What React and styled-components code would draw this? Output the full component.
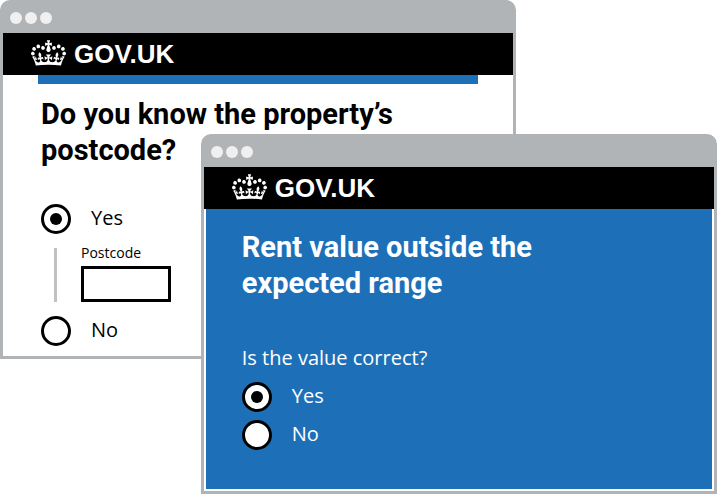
import React from "react";
import styled, { createGlobalStyle } from "styled-components";

const GlobalStyle = createGlobalStyle`
  *, *::before, *::after { box-sizing: border-box; }
  body {
    margin: 0;
    background: #fff;
    color: #000;
    font-family: "Open Sans", "Noto Sans", sans-serif;
  }
`;

const Desktop = styled.main`
  position: relative;
  min-height: 494px;
`;

const Window = styled.section`
  width: 72%;
  padding: 0 3px 3px;
  background: #b1b4b6;
  border-radius: 10px 10px 0 0;
`;

const FrontWindow = styled(Window)`
  position: absolute;
  top: 134px;
  right: 0;
`;

const TitleBar = styled.div`
  display: flex;
  align-items: center;
  gap: 3px;
  height: 33px;
  padding: 3px 7px 0;
`;

const WindowDot = styled.span`
  width: 12px;
  height: 12px;
  border-radius: 50%;
  background: #f0f0f0;
`;

const Header = styled.header`
  display: flex;
  align-items: center;
  height: 42px;
  padding: 0 28px;
  background: #000;
`;

const HomeLink = styled.a`
  display: flex;
  align-items: center;
  gap: 8px;
  color: #fff;
  font: 700 26px/30px "Liberation Sans", Arial, sans-serif;
  text-decoration: none;
`;

const CrownIcon = styled.svg`
  width: 35px;
  height: 26px;
  margin-bottom: 2px;
  fill: currentColor;
`;

const Page = styled.div`
  background: #fff;
  padding: ${(p) => (p.$framed ? "0 2px 2px" : "0 35px 10px")};
`;

const BlueBar = styled.div`
  height: 9px;
  background: #1d70b8;
`;

const Content = styled.form`
  padding: 12px 3px 0;
`;

const BluePanel = styled.form`
  padding: 20px 36px 39px;
  background: #1d70b8;
  color: #fff;
`;

const Heading = styled.h1`
  max-width: 380px;
  margin: 0;
  font: 700 29px/36px Roboto, sans-serif;
`;

const Group = styled.fieldset`
  display: flex;
  flex-direction: column;
  gap: ${(p) => p.$gap};
  min-width: 0;
  margin: ${(p) => p.$top} 0 0;
  padding: 0;
  border: 0;
`;

const Legend = styled.legend`
  padding: 0 0 10px;
  font-size: 20px;
  line-height: 28px;
`;

const Option = styled.label`
  display: flex;
  align-items: center;
  gap: 20px;
  font-size: 20px;
  line-height: 30px;
`;

const OptionText = styled.span`
  padding-bottom: 2px;
  line-height: 28px;
`;

const Radio = styled.input`
  appearance: none;
  flex: none;
  display: grid;
  place-items: center;
  width: 30px;
  height: 30px;
  margin: 0;
  border: 3px solid #000;
  border-radius: 50%;
  background: #fff;

  &:checked::before {
    content: "";
    width: 12px;
    height: 12px;
    border-radius: 50%;
    background: #000;
  }
`;

const Conditional = styled.div`
  display: flex;
  flex-direction: column;
  align-items: flex-start;
  height: 54px;
  margin-left: 13px;
  padding-left: 24px;
  border-left: 3px solid #bfc1c3;
`;

const FieldLabel = styled.label`
  font-size: 14px;
  line-height: 18px;
  margin-top: -4px;
  padding-bottom: 4px;
`;

const TextInput = styled.input`
  width: 90px;
  height: 36px;
  padding: 4px;
  border: 3px solid #000;
  border-radius: 0;
  background: #fff;
  font: inherit;
`;

function Crown() {
  return (
    <CrownIcon viewBox="0 0 132 97" aria-hidden="true">
      <path d="M25 30.2c3.5 1.5 7.7-.2 9.1-3.7 1.5-3.6-.2-7.8-3.9-9.2-3.6-1.4-7.6.3-9.1 3.9-1.4 3.5.3 7.5 3.9 9zM9 39.5c3.6 1.5 7.8-.2 9.2-3.7 1.5-3.6-.2-7.8-3.9-9.1-3.6-1.5-7.6.2-9.1 3.8-1.4 3.5.3 7.5 3.8 9zM4.4 57.2c3.5 1.5 7.7-.2 9.1-3.8 1.5-3.6-.2-7.7-3.9-9.1-3.5-1.5-7.6.3-9.1 3.8-1.4 3.5.3 7.6 3.9 9.1zm38.3-21.4c3.5 1.5 7.7-.2 9.1-3.8 1.5-3.6-.2-7.7-3.9-9.1-3.6-1.5-7.6.3-9.1 3.8-1.3 3.6.4 7.7 3.9 9.1zm64.4-5.6c-3.6 1.5-7.8-.2-9.1-3.7-1.5-3.6.2-7.8 3.8-9.2 3.6-1.4 7.7.3 9.2 3.9 1.3 3.5-.4 7.5-3.9 9zm15.9 9.3c-3.6 1.5-7.7-.2-9.1-3.7-1.5-3.6.2-7.8 3.7-9.1 3.6-1.5 7.7.2 9.2 3.8 1.5 3.5-.3 7.5-3.8 9zm4.7 17.7c-3.6 1.5-7.8-.2-9.2-3.8-1.5-3.6.2-7.7 3.9-9.1 3.6-1.5 7.7.3 9.2 3.8 1.3 3.5-.4 7.6-3.9 9.1zM89.3 35.8c-3.6 1.5-7.8-.2-9.2-3.8-1.4-3.6.2-7.7 3.9-9.1 3.6-1.5 7.7.3 9.2 3.8 1.4 3.6-.3 7.7-3.9 9.1zM69.7 17.7l8.9 4.7V9.3l-8.9 2.8c-.2-.3-.5-.6-.9-.9L72.4 0H59.6l3.5 11.2c-.3.3-.6.5-.9.9l-8.8-2.8v13.1l8.8-4.7c.3.3.6.7.9.9l-5 15.4v.1c-.2.8-.4 1.6-.4 2.4 0 4.1 3.1 7.5 7 8.1h.2c.3 0 .7.1 1 .1.4 0 .7 0 1-.1h.2c4-.6 7.1-4.1 7.1-8.1 0-.8-.1-1.7-.4-2.4V34l-5.1-15.4c.4-.2.7-.6 1-.9zM66 92.8c16.9 0 32.8 1.1 47.1 3.2 4-16.9 8.9-26.7 14-33.5l-9.6-3.4c1 4.9 1.1 7.2 0 10.2-1.5-1.4-3-4.3-4.2-8.7L108.6 76c2.8-2 5-3.2 7.5-3.3-4.4 9.4-10 11.9-13.6 11.2-4.3-.8-6.3-4.6-5.6-7.9 1-4.7 5.7-5.9 8-.5 4.3-8.7-3-11.4-7.6-8.8 7.1-7.2 7.9-13.5 2.1-21.1-8 6.1-8.1 12.3-4.5 20.8-4.7-5.4-12.1-2.5-9.5 6.2 3.4-5.2 7.9-2 7.2 3.1-.6 4.3-6.4 7.8-13.5 7.2-10.3-.9-10.9-8-11.2-13.8 2.5-.5 7.1 1.8 11 7.3L80.2 60c-4.1 4.4-8 5.3-12.3 5.4 1.4-4.4 8-11.6 8-11.6H55.5s6.4 7.2 7.9 11.6c-4.2-.1-8-1-12.3-5.4l1.4 16.4c3.9-5.5 8.5-7.7 10.9-7.3-.3 5.8-.9 12.8-11.1 13.8-7.2.6-12.9-2.9-13.5-7.2-.7-5 3.8-8.3 7.1-3.1 2.7-8.7-4.6-11.6-9.4-6.2 3.7-8.5 3.6-14.7-4.6-20.8-5.8 7.6-5 13.9 2.2 21.1-4.7-2.6-11.9.1-7.7 8.8 2.3-5.5 7.1-4.2 8.1.5.7 3.3-1.3 7.1-5.7 7.9-3.5.7-9-1.8-13.5-11.2 2.5.1 4.7 1.3 7.5 3.3l-4.7-15.4c-1.2 4.4-2.7 7.2-4.3 8.7-1.1-3-.9-5.3 0-10.2l-9.5 3.4c5 6.9 9.9 16.7 14 33.5 14.8-2.1 30.8-3.2 47.7-3.2z" />
    </CrownIcon>
  );
}

function Chrome() {
  return (
    <>
      <TitleBar>
        <WindowDot />
        <WindowDot />
        <WindowDot />
      </TitleBar>
      <Header>
        <HomeLink href="#">
          <Crown />
          GOV.UK
        </HomeLink>
      </Header>
    </>
  );
}

function RadioOption({ name, value, label, defaultChecked }) {
  const id = `${name}-${value}`;
  return (
    <Option htmlFor={id}>
      <Radio
        type="radio"
        id={id}
        name={name}
        value={value}
        defaultChecked={defaultChecked}
      />
      <OptionText>{label}</OptionText>
    </Option>
  );
}

export default function App() {
  return (
    <>
      <GlobalStyle />
      <Desktop>
        <Window>
          <Chrome />
          <Page>
            <BlueBar />
            <Content>
              <Heading id="postcode-question">
                Do you know the property’s postcode?
              </Heading>
              <Group $top="36px" $gap="14px" aria-labelledby="postcode-question">
                <RadioOption name="known" value="yes" label="Yes" defaultChecked />
                <Conditional>
                  <FieldLabel htmlFor="postcode">Postcode</FieldLabel>
                  <TextInput id="postcode" type="text" />
                </Conditional>
                <RadioOption name="known" value="no" label="No" />
              </Group>
            </Content>
          </Page>
        </Window>
        <FrontWindow>
          <Chrome />
          <Page $framed>
            <BluePanel>
              <Heading>Rent value outside the expected range</Heading>
              <Group $top="43px" $gap="8px">
                <Legend>Is the value correct?</Legend>
                <RadioOption name="correct" value="yes" label="Yes" defaultChecked />
                <RadioOption name="correct" value="no" label="No" />
              </Group>
            </BluePanel>
          </Page>
        </FrontWindow>
      </Desktop>
    </>
  );
}
